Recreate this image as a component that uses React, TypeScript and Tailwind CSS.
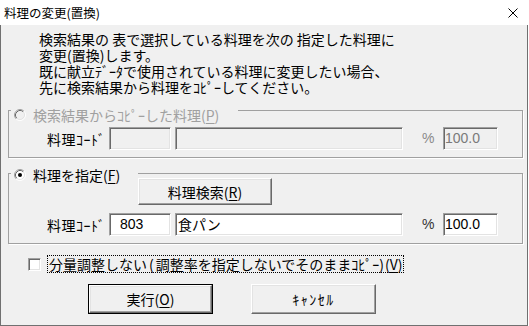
import React from 'react';

const jp = "font-['Noto_Sans_CJK_JP',sans-serif]";
const num = "font-['Liberation_Sans',sans-serif]";

// classic 3D edges
const sunken =
  'border border-t-[#a0a0a0] border-l-[#a0a0a0] border-r-white border-b-white shadow-[inset_1px_1px_0_#696969,inset_-1px_-1px_0_#e3e3e3]';
const raised =
  'border border-t-white border-l-white border-r-[#696969] border-b-[#696969] shadow-[inset_-1px_-1px_0_#a0a0a0,inset_1px_1px_0_#e3e3e3] bg-[#f0f0f0]';

const Radio: React.FC<{ checked?: boolean; disabled?: boolean }> = ({ checked, disabled }) => (
  <svg width="12" height="12" viewBox="0 0 12 12" className="shrink-0">
    <circle cx="6" cy="6" r="4.5" fill={disabled ? '#f0f0f0' : '#fff'} />
    <path d="M2.11 9.89 A5.5 5.5 0 0 1 9.89 2.11" fill="none" stroke="#a0a0a0" />
    <path d="M9.89 2.11 A5.5 5.5 0 0 1 2.11 9.89" fill="none" stroke="#fff" />
    <path d="M2.82 9.18 A4.5 4.5 0 0 1 9.18 2.82" fill="none" stroke="#696969" />
    <path d="M9.18 2.82 A4.5 4.5 0 0 1 2.82 9.18" fill="none" stroke="#e3e3e3" />
    {checked && <circle cx="6" cy="6" r="2" fill="#000" />}
  </svg>
);

const U: React.FC<{ children: React.ReactNode }> = ({ children }) => (
  <span className="underline decoration-1 underline-offset-[2px]">{children}</span>
);

const CodeRow: React.FC<{ disabled?: boolean; code?: string; name?: string; rate: string }> = ({
  disabled,
  code,
  name,
  rate,
}) => {
  const field = `${sunken} h-[23px] ${disabled ? 'bg-[#f0f0f0]' : 'bg-white'} flex items-center`;
  return (
    <div className="flex h-[23px] items-center pl-[38px]">
      <span className={`${jp} w-[62px] text-[14px] leading-[16px] tracking-[0.5px] text-black`}>料理ｺｰﾄﾞ</span>
      <div className={`${field} w-[62px] pl-[10px] ${num} text-[14px] text-black`}>{code}</div>
      <div className={`${field} ml-[4px] w-[228px] pl-[2px] ${jp} text-[14px] text-black`}>{name}</div>
      <span className={`${num} ml-[19px] w-[21px] text-[14px] ${disabled ? 'text-[#8a8a8a]' : 'text-[#333]'}`}>%</span>
      <div className={`${field} w-[55px] pl-[1px] ${num} text-[14px] ${disabled ? 'text-[#7a7a7a]' : 'text-black'}`}>
        {rate}
      </div>
    </div>
  );
};

export default function App() {
  return (
    <div className="h-[326px] w-[529px] bg-white">
      <div className="flex h-[326px] w-[528px] flex-col">
        {/* title bar */}
        <div className="flex h-[25px] items-center justify-between bg-white pl-[4px] pr-[10px]">
          <span className={`${jp} text-[12.5px] leading-[14px] text-black`}>料理の変更(置換)</span>
          <svg width="10" height="10" viewBox="0 0 10 10">
            <path d="M0.5 0.5 L9.5 9.5 M9.5 0.5 L0.5 9.5" stroke="#000" strokeWidth="1" />
          </svg>
        </div>

        {/* body */}
        <div className="flex h-[301px] flex-col border-b border-l border-r border-[#707070] bg-[#f0f0f0]">
          <div className={`${jp} flex flex-col pl-[38px] pt-[6px] text-[14px] leading-[16px] text-black`}>
            <span>検索結果の 表で選択している料理を次の 指定した料理に</span>
            <span>変更(置換)します。</span>
            <span>既に献立ﾃﾞｰﾀで使用されている料理に変更したい場合、</span>
            <span>先に検索結果から料理をｺﾋﾟｰしてください。</span>
          </div>

          {/* group 1 */}
          <div className="ml-[7px] mt-[15px] h-[48px] w-[515px] border border-[#a0a0a0] shadow-[1px_1px_0_#fff]">
            <div className="-mt-[4px] ml-[2px] flex h-[16px] w-[227px] items-center gap-[7px] bg-[#f0f0f0] pl-[3px]">
              <Radio disabled />
              <span className={`${jp} text-[14px] leading-[16px] text-[#a0a0a0]`}>
                検索結果からｺﾋﾟｰした料理(<U>P</U>)
              </span>
            </div>
            <div className="mt-[4px]">
              <CodeRow disabled rate="100.0" />
            </div>
          </div>

          {/* group 2 */}
          <div className="ml-[7px] mt-[15px] h-[71px] w-[515px] border border-[#a0a0a0] shadow-[1px_1px_0_#fff]">
            <div className="-mt-[7px] flex items-start">
              <div className="ml-[2px] flex h-[16px] w-[127px] items-center gap-[7px] bg-[#f0f0f0] pl-[3px]">
                <Radio checked />
                <span className={`${jp} text-[14px] leading-[16px] text-black`}>
                  料理を指定(<U>F</U>)
                </span>
              </div>
              <button
                className={`${raised} ${jp} mt-[11px] flex h-[27px] w-[134px] items-center justify-center text-[14px] leading-[16px] text-black`}
              >
                料理検索(<U>R</U>)
              </button>
            </div>
            <div className="mt-[8px]">
              <CodeRow code="803" name="食パン" rate="100.0" />
            </div>
          </div>

          {/* checkbox */}
          <div className="ml-[27px] mt-[11px] flex h-[18px] items-center">
            <div className="h-[13px] w-[13px] border border-t-[#a0a0a0] border-l-[#a0a0a0] border-r-white border-b-white bg-white shadow-[inset_1px_1px_0_#696969,inset_-1px_-1px_0_#e3e3e3]" />
            <span
              className={`${jp} ml-[6px] flex h-[18px] w-[357px] items-center border border-dotted border-black pl-[1px] text-[14px] leading-[16px] text-black`}
            >
              分量調整しない<span className="mx-[2px]">(</span>調整率を指定しないでそのままｺﾋﾟｰ<span className="mr-[1px]">)</span>(<U>V</U>)
            </span>
          </div>

          {/* buttons */}
          <div className="ml-[87px] mt-[11px] flex">
            <div className="h-[30px] w-[125px] border border-black">
              <button
                className={`${raised} ${jp} flex h-full w-full items-center justify-center text-[14px] leading-[16px] text-black`}
              >
                実行(<U>O</U>)
              </button>
            </div>
            <button
              className={`${raised} ${jp} ml-[38px] flex h-[30px] w-[125px] items-center justify-center text-[14px] leading-[16px] tracking-[1.5px] text-black`}
            >
              ｷｬﾝｾﾙ
            </button>
          </div>
        </div>
      </div>
    </div>
  );
}
